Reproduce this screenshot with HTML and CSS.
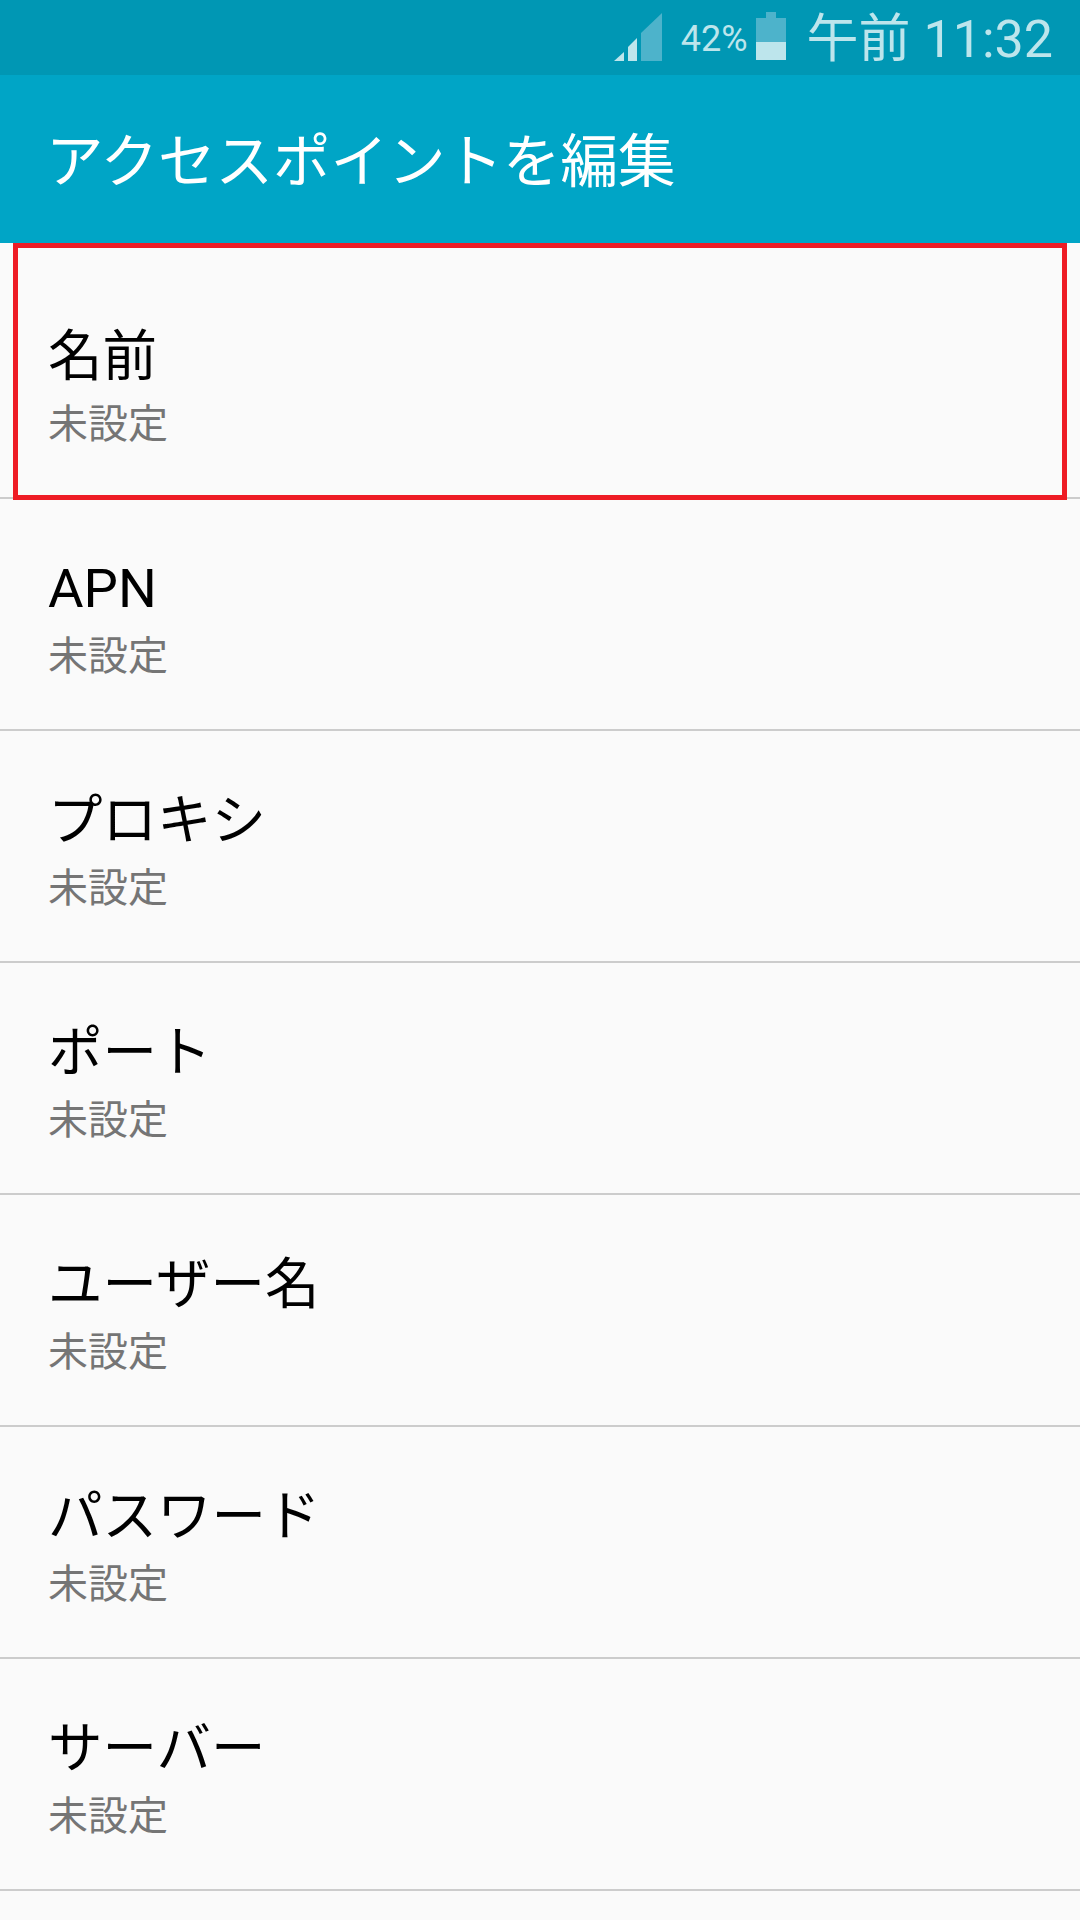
FILE: index.html
```html
<!DOCTYPE html>
<html lang="ja">
<head>
    <meta charset="UTF-8">
    <meta name="viewport" content="width=device-width, initial-scale=1.0">
    <title>アクセスポイントを編集</title>
    <link rel="stylesheet" href="styles.css">
</head>
<body>
    <div class="statusbar">
        <svg class="signal" width="49" height="49" viewBox="0 0 49 49">
            <path d="M0 48 L10 39 V48 Z" fill="#bde5ec"/>
            <path d="M14 48 V34 L23 25 V48 Z" fill="#bde5ec"/>
            <path d="M27 48 V20 L48 0 V48 Z" fill="#4db3cb"/>
        </svg>
        <span class="battery-text">42%</span>
        <svg class="battery" width="30" height="48" viewBox="0 0 30 48">
            <path d="M10 0 H20 V6 H30 V30 H0 V6 H10 Z" fill="#4db3cb"/>
            <rect x="0" y="30" width="30" height="18" fill="#bde5ec"/>
        </svg>
        <span class="clock">午前 11:32</span>
    </div>
    <header class="appbar">
        <h1 class="title1">アクセスポイントを編集</h1>
    </header>
    <div class="list">
        <div class="row first">
            <p class="row-title">名前</p>
            <p class="row-value">未設定</p>
        </div>
        <div class="row">
            <p class="row-title">APN</p>
            <p class="row-value">未設定</p>
        </div>
        <div class="row">
            <p class="row-title">プロキシ</p>
            <p class="row-value">未設定</p>
        </div>
        <div class="row">
            <p class="row-title">ポート</p>
            <p class="row-value">未設定</p>
        </div>
        <div class="row">
            <p class="row-title">ユーザー名</p>
            <p class="row-value">未設定</p>
        </div>
        <div class="row">
            <p class="row-title">パスワード</p>
            <p class="row-value">未設定</p>
        </div>
        <div class="row">
            <p class="row-title">サーバー</p>
            <p class="row-value">未設定</p>
        </div>
        <div class="highlight"></div>
    </div>
</body>
</html>
```

FILE: styles.css
```css
html, body {
    height: 100%;
}

body {
    font-family: Roboto, "Noto Sans CJK JP", sans-serif;
    margin: 0;
    padding: 0;
    background-color: #fafafa;
    overflow: hidden;
}

.statusbar {
    display: flex;
    justify-content: flex-end;
    align-items: center;
    height: 75px;
    padding-right: 27px;
    background-color: #0097b4;
    color: #bde5ec;
    box-sizing: border-box;
}

.signal {
    margin-right: 18px;
    margin-top: -1px;
}

.battery-text {
    font-size: 36px;
    margin-right: 8px;
    margin-top: 2px;
}

.battery {
    margin-right: 21px;
    margin-top: -3px;
}

.clock {
    font-size: 52px;
    line-height: 75px;
    margin-top: 3px;
}

.appbar {
    display: flex;
    align-items: center;
    height: 168px;
    padding-left: 46px;
    background-color: #00a5c6;
    box-sizing: border-box;
}

.title1 {
    margin: 0;
    margin-top: -5px;
    color: #fff;
    font-size: 57.5px;
    font-weight: 400;
}

.list {
    position: relative;
}

.row {
    height: 232px;
    padding: 56px 0 0 48px;
    border-bottom: 2px solid #cccccc;
    box-sizing: border-box;
}

.row.first {
    height: 256px;
    padding-top: 80px;
}

.row-title {
    margin: 0;
    color: #000;
    font-size: 54.5px;
    line-height: 66px;
}

.row-value {
    margin: 0;
    color: #757575;
    font-size: 40px;
    line-height: 50px;
    margin-top: 11px;
}

.highlight {
    position: absolute;
    top: 0;
    left: 13px;
    width: 1054px;
    height: 257px;
    border: 5px solid #ee1c25;
    box-sizing: border-box;
}
```
